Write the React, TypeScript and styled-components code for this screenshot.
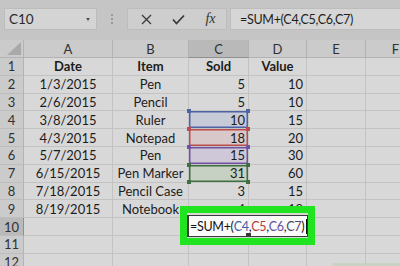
import React from "react";
import styled, { createGlobalStyle, css } from "styled-components";

const Global = createGlobalStyle`
  html, body { margin: 0; padding: 0; background: #c6c6c6; overflow: hidden; }
  body { font-family: Lato, "Liberation Sans", sans-serif; }
`;

const Page = styled.div`
  width: 400px;
  height: 266px;
  overflow: hidden;
  background: #c6c6c6;
  display: flex;
  flex-direction: column;
`;

const TopBar = styled.div`
  height: 40px;
  flex: none;
  display: flex;
  align-items: center;
  padding: 0 0 2px 4px;
  box-sizing: border-box;
  background: #c5c5c5;
`;

const NameBox = styled.div`
  width: 93px;
  height: 22px;
  box-sizing: border-box;
  background: #d4d4d4;
  border: 1px solid #bcbcbc;
  display: flex;
  align-items: center;
  justify-content: space-between;
  padding: 0 6px 0 4px;
  font-size: 13.5px;
  color: #2a2a2a;
`;

const Caret = styled.span`
  width: 0;
  height: 0;
  border-left: 2.5px solid transparent;
  border-right: 2.5px solid transparent;
  border-top: 3px solid #555;
`;

const Dots = styled.div`
  width: 30px;
  display: flex;
  flex-direction: column;
  align-items: center;
  gap: 2px;
  span {
    width: 2px;
    height: 2px;
    background: #9a9a9a;
  }
`;

const FxGroup = styled.div`
  width: 100px;
  height: 22px;
  box-sizing: border-box;
  background: #cecece;
  border: 1px solid #bdbdbd;
  display: grid;
  grid-template-columns: 32px 33px 1fr;
  align-items: center;
  justify-items: center;
  padding-left: 2px;
`;

const FxText = styled.span`
  font-family: "Liberation Serif", "DejaVu Serif", serif;
  font-style: italic;
  font-size: 14px;
  color: #333;
`;

const FormulaInput = styled.div`
  flex: 1;
  margin-left: 3px;
  height: 22px;
  box-sizing: border-box;
  background: #d6d6d6;
  border: 1px solid #bdbdbd;
  border-right: none;
  display: flex;
  align-items: center;
  padding-left: 9px;
  font-size: 12.5px;
  letter-spacing: -0.3px;
  color: #1e1e1e;
`;

const SheetWrap = styled.div`
  position: relative;
  flex: 1;
  background: #d8d8d8;
`;

const Grid = styled.div`
  display: grid;
  grid-template-columns: 24px 89px 76px 60px 58px 59px 60px;
  grid-template-rows: 18px repeat(12, 17.8px);
`;

const Corner = styled.div`
  background: #cbcbcb;
  border-right: 1px solid #b3b3b3;
  border-bottom: 1px solid #b3b3b3;
  box-sizing: border-box;
  display: flex;
  align-items: flex-end;
  justify-content: flex-end;
  padding: 0 2px 2px 0;
`;

const ColHead = styled.div<{ $active?: boolean }>`
  background: ${(p) => (p.$active ? "#b9b9b9" : "#cbcbcb")};
  border-right: 1px solid #b3b3b3;
  border-bottom: 1px solid ${(p) => (p.$active ? "#8f8f8f" : "#b3b3b3")};
  box-sizing: border-box;
  display: flex;
  align-items: center;
  justify-content: center;
  font-size: 13px;
  color: #303030;
`;

const RowHead = styled.div<{ $active?: boolean }>`
  background: ${(p) => (p.$active ? "#bababa" : "#cbcbcb")};
  border-right: 1px solid ${(p) => (p.$active ? "#8f8f8f" : "#b3b3b3")};
  border-bottom: 1px solid #bdbdbd;
  box-sizing: border-box;
  display: flex;
  align-items: center;
  justify-content: center;
  font-size: 13px;
  color: #303030;
`;

type Hl = "blue" | "red" | "purple" | "green";

const hlColors: Record<Hl, { bg: string; line: string }> = {
  blue: { bg: "#c7cad7", line: "#4e62a6" },
  red: { bg: "#d9c8c9", line: "#bb4c4e" },
  purple: { bg: "#cec8d8", line: "#6f52a4" },
  green: { bg: "#c6d1c4", line: "#3f6f40" },
};

const Cell = styled.div<{ $align?: "left" | "center" | "right"; $bold?: boolean; $hl?: Hl }>`
  position: relative;
  box-sizing: border-box;
  border-right: 1px solid #c3c3c3;
  border-bottom: 1px solid #c3c3c3;
  display: flex;
  align-items: center;
  justify-content: ${(p) =>
    p.$align === "right" ? "flex-end" : p.$align === "center" ? "center" : "flex-start"};
  padding: 0 3px;
  font-size: 13px;
  font-weight: ${(p) => (p.$bold ? 700 : 400)};
  color: #1c1c1c;
  white-space: nowrap;
  ${(p) =>
    p.$hl &&
    css`
      background: ${hlColors[p.$hl].bg};
      box-shadow: inset 0 0 0 1.5px ${hlColors[p.$hl].line};
    `}
`;

const Handle = styled.span<{ $c: string; $v: "top" | "bottom"; $h: "left" | "right" }>`
  position: absolute;
  width: 4px;
  height: 4px;
  background: ${(p) => p.$c};
  ${(p) => (p.$v === "top" ? "top: -2px;" : "bottom: -2px;")}
  ${(p) => (p.$h === "left" ? "left: -2px;" : "right: -2px;")}
  z-index: 2;
`;

const Highlight = styled.div`
  position: absolute;
  left: 180px;
  top: 166px;
  width: 135px;
  height: 39px;
  box-sizing: border-box;
  border: 7px solid #20e41f;
  background: #d8d8d8;
  display: flex;
  padding: 2px 0 1px 0;
  z-index: 5;
`;

const Editor = styled.div`
  flex: 1;
  background: #fafafa;
  border: 1px solid #3a3a3a;
  border-left-width: 2px;
  display: flex;
  align-items: center;
  padding-left: 1px;
  font-size: 12.5px;
  letter-spacing: -0.3px;
  color: #151515;
  white-space: nowrap;
  overflow: hidden;
`;

const Ref = styled.span<{ $c: string }>`
  color: ${(p) => p.$c};
`;

const CursorBar = styled.span`
  display: inline-block;
  width: 1px;
  height: 15px;
  background: #111;
  margin-left: 2px;
`;

const FillHandle = styled.span`
  position: absolute;
  left: 246px;
  top: 193px;
  width: 5px;
  height: 4px;
  background: #3a3a3a;
  z-index: 6;
`;

const Tab = styled.div`
  position: absolute;
  left: 332px;
  top: 223px;
  width: 68px;
  height: 4px;
  background: #c9d3c3;
`;

const cols = ["A", "B", "C", "D", "E", "F"];

type Row = [string, string, string, string];
const data: Row[] = [
  ["Date", "Item", "Sold", "Value"],
  ["1/3/2015", "Pen", "5", "10"],
  ["2/6/2015", "Pencil", "5", "10"],
  ["3/8/2015", "Ruler", "10", "15"],
  ["4/3/2015", "Notepad", "18", "20"],
  ["5/7/2015", "Pen", "15", "30"],
  ["6/15/2015", "Pen Marker", "31", "60"],
  ["7/18/2015", "Pencil Case", "3", "15"],
  ["8/19/2015", "Notebook", "4", "18"],
  ["", "", "", ""],
  ["", "", "", ""],
  ["", "", "", ""],
];

const hlByRow: Record<number, Hl> = { 4: "blue", 5: "red", 6: "purple", 7: "green" };

export default function App() {
  return (
    <>
      <Global />
      <Page>
        <TopBar>
          <NameBox>
            <span>C10</span>
            <Caret />
          </NameBox>
          <Dots>
            <span />
            <span />
            <span />
          </Dots>
          <FxGroup>
            <svg width="11" height="11" viewBox="0 0 11 11">
              <path d="M1 1 L10 10 M10 1 L1 10" stroke="#3a3a3a" strokeWidth="1.3" fill="none" />
            </svg>
            <svg width="13" height="11" viewBox="0 0 13 11">
              <path d="M1 5.5 L4.5 9.5 L12 1.5" stroke="#3a3a3a" strokeWidth="1.8" fill="none" />
            </svg>
            <FxText>fx</FxText>
          </FxGroup>
          <FormulaInput>=SUM+(C4,C5,C6,C7)</FormulaInput>
        </TopBar>
        <SheetWrap>
          <Grid>
            <Corner>
              <svg width="14" height="13" viewBox="0 0 14 13">
                <polygon points="14,0 14,13 0,13" fill="#a9a9a9" />
              </svg>
            </Corner>
            {cols.map((c) => (
              <ColHead key={c} $active={c === "C"}>
                {c}
              </ColHead>
            ))}
            {data.map((r, i) => {
              const n = i + 1;
              const hl = hlByRow[n];
              const line = hl ? hlColors[hl].line : "";
              return (
                <React.Fragment key={n}>
                  <RowHead $active={n === 10}>{n}</RowHead>
                  <Cell $align="center" $bold={n === 1}>
                    {r[0]}
                  </Cell>
                  <Cell $align="center" $bold={n === 1}>
                    {r[1]}
                  </Cell>
                  <Cell $align={n === 1 ? "center" : "right"} $bold={n === 1} $hl={hl}>
                    {r[2]}
                    {hl && (
                      <>
                        <Handle $c={line} $v="top" $h="left" />
                        <Handle $c={line} $v="top" $h="right" />
                        {n === 7 && (
                          <>
                            <Handle $c={line} $v="bottom" $h="left" />
                            <Handle $c={line} $v="bottom" $h="right" />
                          </>
                        )}
                      </>
                    )}
                  </Cell>
                  <Cell $align={n === 1 ? "center" : "right"} $bold={n === 1}>
                    {r[3]}
                  </Cell>
                  <Cell />
                  <Cell />
                </React.Fragment>
              );
            })}
          </Grid>
          <Highlight>
            <Editor>
              =SUM+(<Ref $c="#3d5ea8">C4</Ref>,<Ref $c="#b23c3e">C5</Ref>,<Ref $c="#6a4c9e">C6</Ref>,<Ref $c="#4a4a6a">C7</Ref>)
              <CursorBar />
            </Editor>
          </Highlight>
          <FillHandle />
          <Tab />
        </SheetWrap>
      </Page>
    </>
  );
}
